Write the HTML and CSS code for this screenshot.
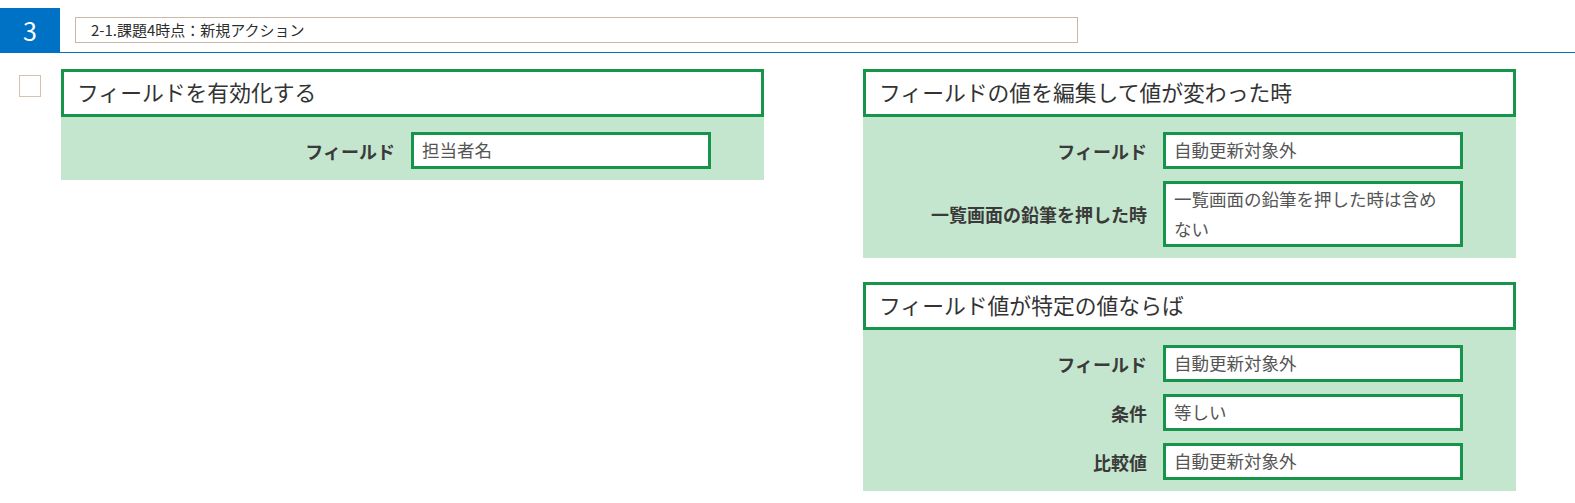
FILE: index.html
```html
<!DOCTYPE html>
<html lang="ja">
<head>
<meta charset="utf-8">
<link rel="stylesheet" href="styles.css">
</head>
<body>
<div class="topbar">
  <div class="num">3</div>
  <div class="name-input">2-1.課題4時点：新規アクション</div>
</div>
<div class="main">
  <div class="check"></div>
  <div class="col-left">
    <div class="card">
      <div class="card-title">フィールドを有効化する</div>
      <div class="card-body">
        <div class="label">フィールド</div>
        <div class="field">担当者名</div>
      </div>
    </div>
  </div>
  <div class="col-right">
    <div class="card">
      <div class="card-title">フィールドの値を編集して値が変わった時</div>
      <div class="card-body">
        <div class="label">フィールド</div>
        <div class="field">自動更新対象外</div>
        <div class="label">一覧画面の鉛筆を押した時</div>
        <div class="field multi">一覧画面の鉛筆を押した時は含めない</div>
      </div>
    </div>
    <div class="card">
      <div class="card-title">フィールド値が特定の値ならば</div>
      <div class="card-body">
        <div class="label">フィールド</div>
        <div class="field">自動更新対象外</div>
        <div class="label">条件</div>
        <div class="field">等しい</div>
        <div class="label">比較値</div>
        <div class="field">自動更新対象外</div>
      </div>
    </div>
  </div>
</div>
</body>
</html>
```

FILE: styles.css
```css
* { box-sizing: border-box; }
html, body { margin: 0; padding: 0; background: #fff; }
body {
  font-family: "Noto Sans CJK JP", "Noto Sans", sans-serif;
  color: #333;
}
.topbar {
  display: flex;
  align-items: center;
  margin-top: 8px;
  height: 45px;
  border-bottom: 1px solid #0072c6;
}
.num {
  width: 60px;
  height: 44px;
  align-self: flex-start;
  background: #0072c6;
  color: #fff;
  font-size: 25px;
  display: flex;
  align-items: center;
  justify-content: center;
}
.name-input {
  margin-left: 15px;
  width: 1003px;
  height: 26px;
  border: 1px solid #c8b8a8;
  font-size: 15px;
  line-height: 24px;
  padding-left: 15px;
  color: #2e2e2e;
}
.main {
  display: flex;
  align-items: flex-start;
  padding: 16px 0 0 19px;
}
.check {
  width: 22px;
  height: 22px;
  border: 1px solid #d2c3b4;
  margin-top: 6px;
  margin-right: 20px;
}
.col-left { width: 703px; }
.col-right {
  width: 653px;
  margin-left: 99px;
  display: flex;
  flex-direction: column;
  gap: 24px;
}
.card-title {
  height: 48px;
  border: 3px solid #15944a;
  font-size: 21.8px;
  line-height: 40px;
  padding-left: 13px;
  color: #333;
  background: #fff;
}
.card-body {
  background: #c5e6ce;
  display: grid;
  grid-template-columns: 1fr 300px;
  column-gap: 16px;
  row-gap: 12px;
  align-items: center;
  padding: 15px 53px 11px 0;
}
.label {
  text-align: right;
  font-weight: bold;
  font-size: 18px;
  color: #3a3a3a;
}
.field {
  background: #fff;
  border: 3px solid #15944a;
  height: 37px;
  font-size: 17.5px;
  line-height: 30px;
  padding: 0 8px;
  color: #555;
}
.field.multi {
  height: 66px;
  line-height: 30px;
}
```
